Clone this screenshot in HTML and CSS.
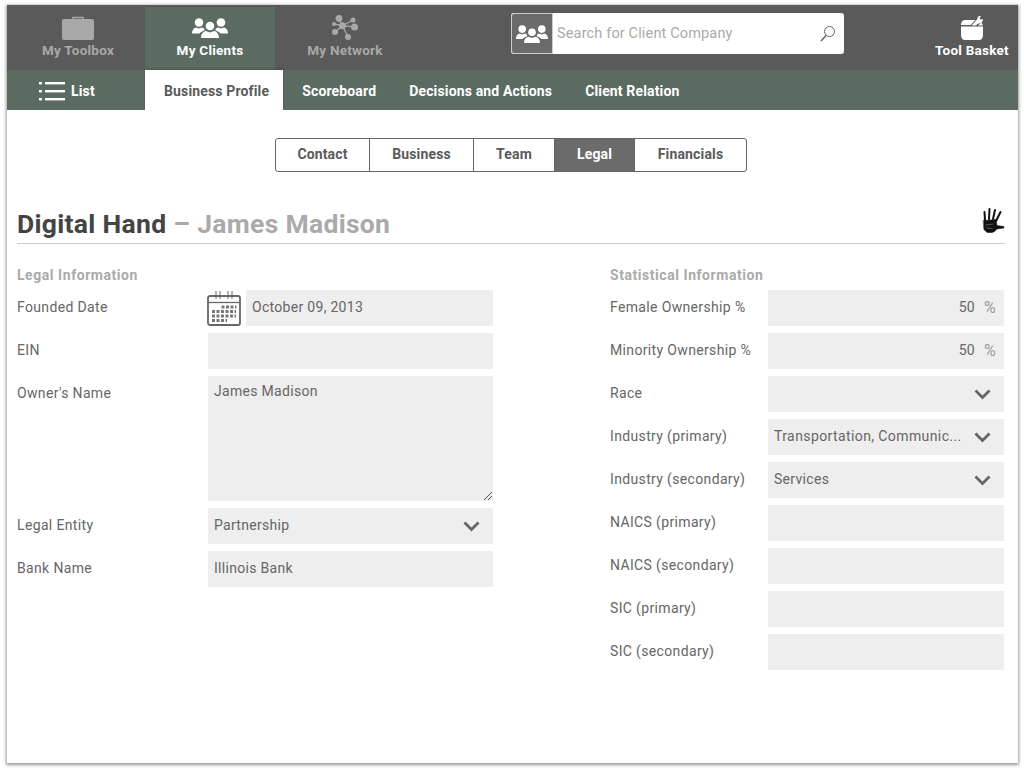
FILE: index.html
```html
<!DOCTYPE html>
<html>
<head>
<meta charset="UTF-8">
<title>Digital Hand - Legal</title>
<link rel="stylesheet" href="styles.css">
</head>
<body>
<svg class="defs" width="0" height="0">
	<symbol id="people" viewBox="0 0 36 20">
		<circle cx="7" cy="4.500" r="4.300"/><circle cx="29" cy="4.500" r="4.300"/><circle cx="18" cy="8" r="4.300"/>
		<path d="M0 15.500c0-3 1.500-5.500 4-6l3 1 3-1c1 .2 2 .7 2.500 1.500v1.500c-2.500 1-4.500 2-5 3z"/>
		<path d="M36 15.500c0-3-1.500-5.500-4-6l-3 1-3-1c-1 .2-2 .7-2.500 1.500v1.500c2.500 1 4.500 2 5 3z"/>
		<path d="M9 20c0-4 2-6.500 5-7l4 1.500 4-1.500c3 .5 5 3 5 7z"/>
	</symbol>
	<symbol id="chevron" viewBox="0 0 17 11">
		<path d="M1.500 1.500 8.500 8.500l7-7" fill="none" stroke="#666" stroke-width="2.800"/>
	</symbol>
</svg>

<div class="window">
	<!-- top bar -->
	<div class="topbar">
		<div class="toptab toptab-toolbox">
			<svg width="32" height="24" viewBox="0 0 32 24"><path d="M11 3V1.500h10V3" fill="none" stroke="#a8a8a8" stroke-width="1.500"/><rect y="3" width="32" height="21" rx="2" fill="#a8a8a8"/></svg>
			<span>My Toolbox</span>
		</div>
		<div class="toptab toptab-clients active">
			<svg class="icon-white" width="36" height="20"><use href="#people"/></svg>
			<span>My Clients</span>
		</div>
		<div class="toptab toptab-network">
			<svg width="26" height="25" viewBox="0 0 26 25" fill="#a8a8a8" stroke="#a8a8a8"><path d="M10.500 10.700 7 3.500M10.500 10.700 21 5M10.500 10.700 23 12M10.500 10.700 16 22M10.500 10.700 3 17M10.500 10.700 1.500 9" stroke-width="1.300"/><g stroke="none"><circle cx="10.500" cy="10.700" r="3.500"/><circle cx="7" cy="3.500" r="3.400"/><circle cx="21" cy="5" r="2.500"/><circle cx="22.500" cy="12" r="3.500"/><circle cx="16" cy="22" r="3"/><circle cx="3" cy="17" r="3"/><circle cx="2" cy="9" r="2"/></g></svg>
			<span>My Network</span>
		</div>
		<div class="search">
			<div class="search-type"><svg class="icon-white" width="32" height="18"><use href="#people"/></svg></div>
			<div class="search-text">Search for Client Company</div>
			<svg class="search-icon" width="16" height="17" viewBox="0 0 16 17" fill="none" stroke="#666"><circle cx="9.500" cy="6.500" r="5"/><path d="M6 10.500 1 16" stroke-width="1.500"/></svg>
		</div>
		<div class="toptab toptab-basket">
			<svg width="22" height="24" viewBox="0 0 22 24" fill="#fff"><path d="M0 10.500h22V19c0 3-1.500 5-4 5H4c-2.500 0-4-2-4-5z"/><path d="M0 9C0 5.500 2 4 4 4h10.500L9.500 9z"/><path d="M10.500 9.500l6-6.500c-.5-1.500 1-3.500 4-3.500l-2 2.500 1 1.500 2.500-.5c0 3-2 4.500-4.500 4.500l-3 2z"/><path d="M17 9.500l3.500-3 1.500 3z"/></svg>
			<span>Tool Basket</span>
		</div>
	</div>

	<!-- second bar -->
	<div class="subbar">
		<div class="list-tab">
			<svg width="26" height="20" viewBox="0 0 26 20" fill="#fff"><rect width="3" height="2.400" y="1"/><rect x="6" y="1" width="20" height="2.400"/><rect width="3" height="2.400" y="9"/><rect x="6" y="9" width="20" height="2.400"/><rect width="3" height="2.400" y="17"/><rect x="6" y="17" width="20" height="2.400"/></svg>
			<span>List</span>
		</div>
		<div class="subtab current">Business Profile</div>
		<div class="subtab">Scoreboard</div>
		<div class="subtab">Decisions and Actions</div>
		<div class="subtab">Client Relation</div>
	</div>

	<div class="content">
		<div class="segments">
			<div class="seg seg-contact">Contact</div>
			<div class="seg seg-business">Business</div>
			<div class="seg seg-team">Team</div>
			<div class="seg seg-legal selected">Legal</div>
			<div class="seg seg-financials">Financials</div>
		</div>

		<div class="title-row">
			<h1><span class="company">Digital Hand</span> <span class="owner">&ndash; James Madison</span></h1>
			<svg class="hand" width="23" height="26" viewBox="0 0 23 26" fill="#111" stroke="#111" stroke-linecap="round">
				<path d="M3 14 2.500 5M7 12l.5-10M11 12l2-9M14 14l4.500-9" stroke-width="2"/>
				<path d="M1.500 13.500 14 12.500l1 6 7 1v1.500l-7 1-2.500 2.500-2 1H5l-3-3z" stroke-width=".5"/>
				<path d="M4 18l7-1M5 21l5 .5" stroke="#777" stroke-width=".7" fill="none"/>
			</svg>
		</div>

		<div class="columns">
			<div class="col-left">
				<h2>Legal Information</h2>
				<div class="row">
					<div class="label">Founded Date</div>
					<svg class="calendar" width="34" height="36" viewBox="0 0 34 36">
						<rect x="1" y="6" width="32" height="29" rx="2" fill="#fff" stroke="#666" stroke-width="1.800"/>
						<path d="M1 12.500h32" stroke="#666" stroke-width="1.300"/>
						<path d="M9 1v8M13 1v8M21 1v8M25 1v8" stroke="#666"/>
						<path d="M14.500 17h15M5 21.500h24M5 26h24M5 30.500h15" stroke="#777" stroke-width="3" stroke-dasharray="3 1.500"/>
					</svg>
					<div class="field field-date">October 09, 2013</div>
				</div>
				<div class="row">
					<div class="label">EIN</div>
					<div class="field"></div>
				</div>
				<div class="row">
					<div class="label">Owner's Name</div>
					<div class="field field-area">James Madison
						<svg class="grip" width="9" height="9" viewBox="0 0 9 9" stroke="#555"><path d="M1 9 9 1M5 9l4-4"/></svg>
					</div>
				</div>
				<div class="row">
					<div class="label">Legal Entity</div>
					<div class="field field-select">Partnership<svg class="chevron" width="17" height="11"><use href="#chevron"/></svg></div>
				</div>
				<div class="row">
					<div class="label">Bank Name</div>
					<div class="field">Illinois Bank</div>
				</div>
			</div>

			<div class="col-right">
				<h2>Statistical Information</h2>
				<div class="row">
					<div class="label">Female Ownership %</div>
					<div class="field field-percent"><span>50</span><span class="unit">%</span></div>
				</div>
				<div class="row">
					<div class="label">Minority Ownership %</div>
					<div class="field field-percent"><span>50</span><span class="unit">%</span></div>
				</div>
				<div class="row">
					<div class="label">Race</div>
					<div class="field field-select"><svg class="chevron" width="17" height="11"><use href="#chevron"/></svg></div>
				</div>
				<div class="row">
					<div class="label">Industry (primary)</div>
					<div class="field field-select"><span class="long-value">Transportation, Communic...</span><svg class="chevron" width="17" height="11"><use href="#chevron"/></svg></div>
				</div>
				<div class="row">
					<div class="label">Industry (secondary)</div>
					<div class="field field-select">Services<svg class="chevron" width="17" height="11"><use href="#chevron"/></svg></div>
				</div>
				<div class="row">
					<div class="label">NAICS (primary)</div>
					<div class="field"></div>
				</div>
				<div class="row">
					<div class="label">NAICS (secondary)</div>
					<div class="field"></div>
				</div>
				<div class="row">
					<div class="label">SIC (primary)</div>
					<div class="field"></div>
				</div>
				<div class="row">
					<div class="label">SIC (secondary)</div>
					<div class="field"></div>
				</div>
			</div>
		</div>
	</div>
</div>
</body>
</html>
```

FILE: styles.css
```css
* {box-sizing: border-box;}

html, body {margin: 0; padding: 0; background: #fff;}

body {font-family: Roboto, "Liberation Sans", sans-serif;
		font-size: 14px;
		color: #666;
		letter-spacing: .3px;
		height: 768px;}

.defs {position: absolute;}

.window {width: 1011px;
		height: 758px;
		margin: 0 0 0 7px;
		position: relative;
		top: 5px;
		background: #fff;
		box-shadow: 0 1px 3px 1px rgba(0,0,0,.4);}

/* top bar */
.topbar {display: flex;
		height: 65px;
		background: #5a5a5a;}

.toptab {display: flex;
		flex-direction: column;
		align-items: center;
		justify-content: flex-end;
		padding-bottom: 12px;
		font-size: 13.500px;
		font-weight: 700;
		line-height: 16px;
		letter-spacing: .25px;
		color: #a8a8a8;}

.toptab svg {margin-bottom: 2px;}

.toptab-toolbox {width: 138px; padding-left: 4px;}
.toptab-clients {width: 130px; margin-top: 2px;}
.toptab-clients svg {margin-bottom: 4px;}
.toptab-network {width: 140px;}
.toptab-basket {width: 80px; margin-left: 88px; color: #fff; white-space: nowrap;}

.toptab.active {background: #5b6b62; color: #fff;}

.icon-white {fill: #fff;}

.search {display: flex;
		align-items: center;
		width: 333px;
		height: 41px;
		margin: 8px 0 0 96px;
		background: #fff;
		border-radius: 3px;}

.search-type {display: flex;
		align-items: center;
		justify-content: center;
		width: 42px;
		height: 41px;
		background: #6b6b6b;
		border: 1px solid #ccc;
		border-radius: 3px 0 0 3px;}

.search-text {flex: 1;
		padding-left: 4px;
		color: #aaa;
		font-size: 14.500px;
		letter-spacing: .15px;}

.search-icon {margin-right: 8px;}

/* second bar */
.subbar {display: flex;
		height: 40px;
		background: #5b6b62;
		color: #fff;
		font-weight: 700;
		font-size: 14px;
		letter-spacing: .15px;}

.list-tab {display: flex;
		align-items: center;
		gap: 6px;
		width: 138px;
		padding: 2px 0 0 32px;}

.subtab {padding: 0 14px 0 19px;
		line-height: 42px;
		white-space: nowrap;}

.subtab.current {background: #fff;
		color: #5a5a5a;
		box-shadow: 0 -1px 2px rgba(0,0,0,.2);}

/* segments */
.content {padding: 28px 13px 0 10px;}

.segments {display: flex;
		width: 472px;
		height: 34px;
		margin: 0 auto 0 258px;
		border: 1px solid #666;
		border-radius: 3px;
		overflow: hidden;
		font-weight: 700;
		letter-spacing: .15px;
		color: #5a5a5a;}

.seg {display: flex;
		align-items: center;
		justify-content: center;
		padding-bottom: 2px;
		border-left: 1px solid #666;}

.seg-contact {width: 93px; border-left: 0;}
.seg-business {width: 104px;}
.seg-team {width: 81px;}
.seg-legal {width: 80px;}
.seg-financials {flex: 1;}

.seg.selected {background: #6b6b6b; color: #fff;}

/* title */
.title-row {display: flex;
		align-items: flex-end;
		justify-content: space-between;
		height: 38px;
		margin-top: 34px;
		border-bottom: 1px solid #ccc;
		padding-bottom: 3px;}

h1 {margin: 0;
		font-size: 26.500px;
		line-height: 32px;
		font-weight: 700;
		letter-spacing: .3px;}

.company {color: #444;}
.owner {color: #aaa;}

.hand {margin-bottom: 7px;}

/* form */
.columns {display: flex;
		padding-top: 23px;}

.col-left {width: 476px;}
.col-right {width: 394px; margin-left: 117px;}

h2 {margin: 0 0 6px;
		font-size: 14px;
		line-height: 17px;
		font-weight: 700;
		letter-spacing: .55px;
		color: #aaa;}

.row {display: flex;
		margin-bottom: 7px;}

.label {flex: none;
		line-height: 34px;
		font-size: 14px;
		letter-spacing: .35px;}

.col-left .label {width: 191px;}
.col-right .label {width: 158px;}

.calendar {flex: none;
		margin: 0 5px 0 -1px;}

.field {flex: 1;
		display: flex;
		align-items: center;
		min-width: 0;
		height: 36px;
		padding: 0 6px 2px;
		background: #eee;
		color: #666;
		font-size: 14px;}

.field-area {position: relative;
		align-items: flex-start;
		height: 125px;
		padding-top: 7px;
		line-height: 17px;}

.grip {position: absolute;
		right: 1px;
		bottom: 1px;}

.field-select {padding-right: 13px;}

.chevron {flex: none;
		margin-left: auto;
		position: relative;
		top: 1px;}

.long-value {white-space: nowrap;
		letter-spacing: .4px;}

.field-percent {justify-content: flex-end;
		padding-right: 8px;}

.unit {margin-left: 9px;
		font-size: 16px;
		color: #999;}
```
